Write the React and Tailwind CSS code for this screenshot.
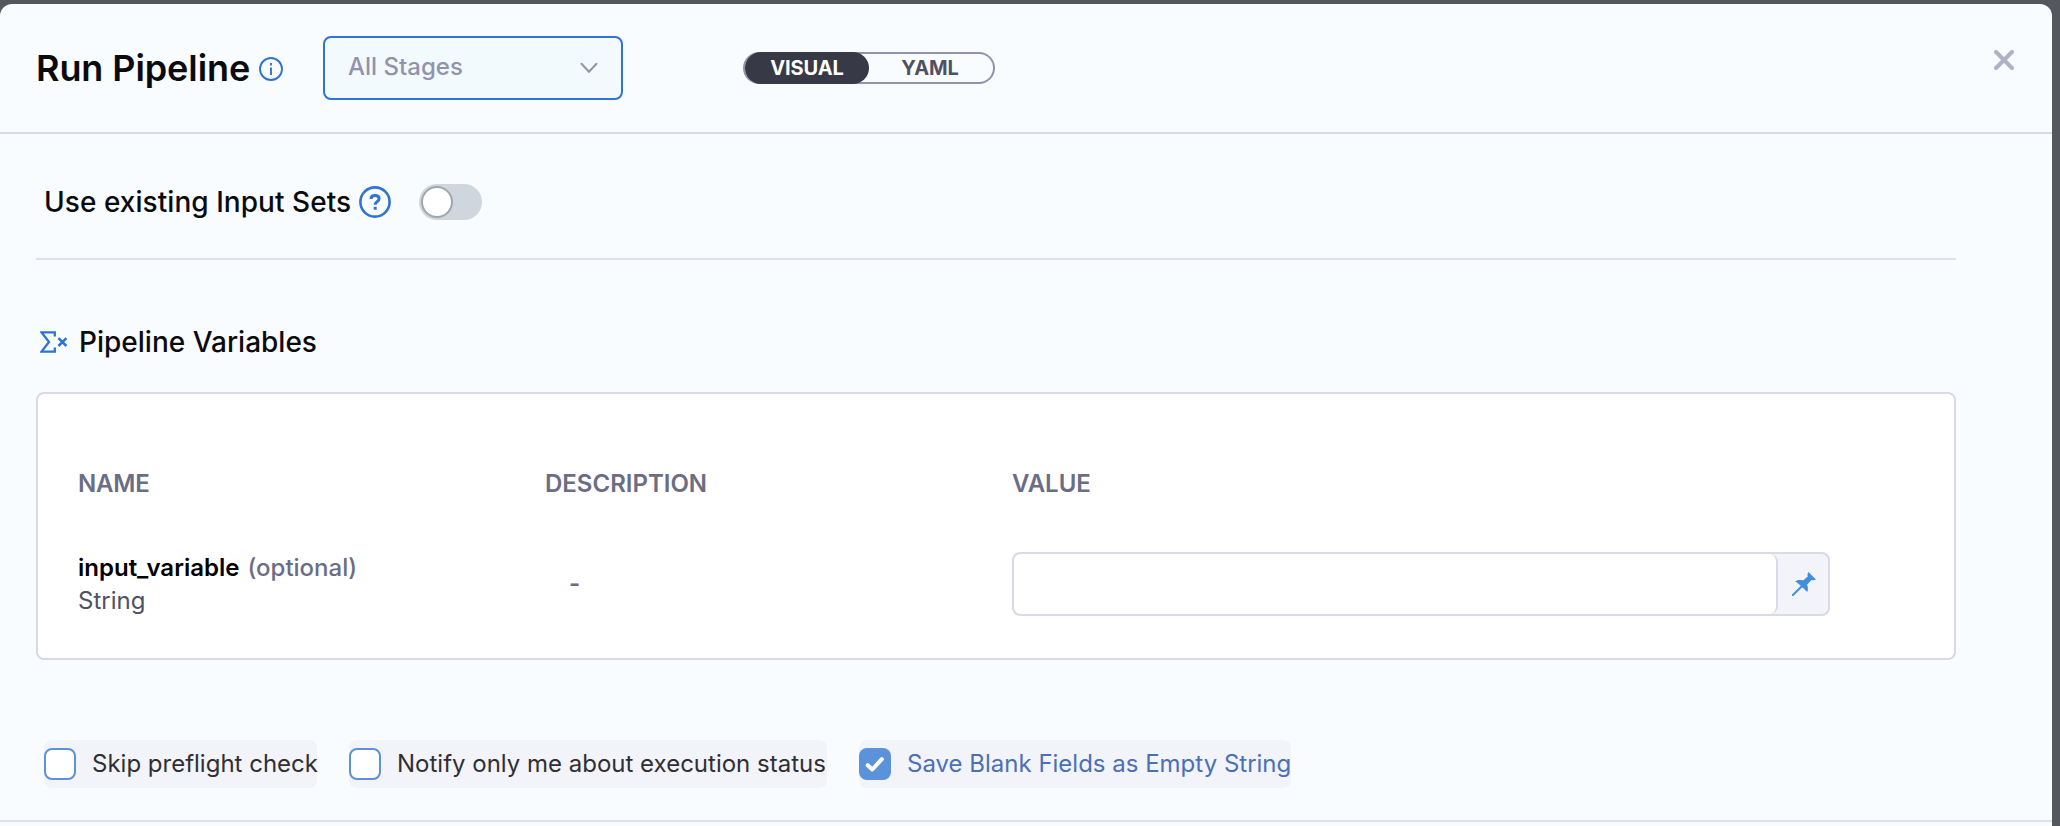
function Box({ checked, width, children }) {
  return (
    <label className={`flex h-12 items-center gap-4 rounded-lg bg-[#f3f3fa] ${width}`}>
      {checked ? (
        <span className="flex size-8 shrink-0 items-center justify-center rounded-lg bg-[#5b92da]">
          <svg width="32" height="32" viewBox="0 0 32 32" fill="none" stroke="#fff" strokeWidth="4" strokeLinecap="round" strokeLinejoin="round">
            <path d="M8.7 17.2 13.3 21.5 22.8 11.2" />
          </svg>
        </span>
      ) : (
        <span className="size-8 shrink-0 rounded-lg border-2 border-[#5b92da] bg-white" />
      )}
      <span className={checked ? "text-2xl whitespace-nowrap text-[#4a70b8]" : "text-2xl whitespace-nowrap text-[#2f2f33]"}>{children}</span>
    </label>
  );
}

export default function App() {
  return (
    <div className="h-[826px] w-[2060px] overflow-hidden bg-[#54575e] pt-1 pr-2 font-['Inter',sans-serif] text-[#0b0b0d]">
      <div className="flex h-[822px] flex-col rounded-t-xl bg-[#f9fcff]">
        <header className="flex h-[130px] shrink-0 items-start border-b-2 border-[#d9dae5] pl-9">
          <h1 className="mt-10 w-[223px] text-[36px] leading-[48px] font-semibold tracking-[-0.09px] whitespace-nowrap">Run Pipeline</h1>
          <svg className="mt-[53px] size-6" viewBox="0 0 24 24" fill="none" stroke="#2f74d0" strokeWidth="1.9">
            <circle cx="12" cy="12" r="11" />
            <path d="M12 10.5V18" />
            <path d="M12 6v2.4" />
          </svg>
          <div className="mt-8 ml-10 flex h-16 w-[300px] items-center justify-between rounded-lg border-2 border-[#2f74d0] bg-[#f2fafd] pr-[23px] pl-[23px]">
            <span className="-mt-0.5 text-2xl font-[550] text-[#9293ab]">All Stages</span>
            <svg width="18" height="12" viewBox="0 0 18 12" fill="none" stroke="#9293ab" strokeWidth="2" strokeLinecap="round">
              <path d="m1.5 1.8 7.5 8 7.5-8" />
            </svg>
          </div>
          <div className="mt-12 ml-[120px] flex h-8 w-[252px] items-stretch rounded-full bg-[#f9fcff] text-xl font-bold tracking-[-0.1px] inset-ring-2 inset-ring-[#9293ab]">
            <span className="ml-0.5 flex w-[124px] items-center justify-center rounded-full bg-[#383946] text-white">VISUAL</span>
            <span className="flex flex-1 items-center justify-center pr-1 text-[#4f5162]">YAML</span>
          </div>
          <svg className="mt-[46px] ml-[999px] size-5" viewBox="0 0 20 20" stroke="#b0b1c4" strokeWidth="4" strokeLinecap="round">
            <path d="m2 2 16 16M18 2 2 18" />
          </svg>
        </header>

        <main className="flex h-[686px] shrink-0 flex-col pr-24 pl-9">
          <section className="flex h-[126px] shrink-0 items-center border-b-2 border-[#dfe1e8] pt-4 pb-1 pl-2">
            <h2 className="w-[315px] text-[28px] font-medium tracking-[0.05px] whitespace-nowrap">Use existing Input Sets</h2>
            <svg className="size-8" viewBox="0 0 32 32" fill="none" stroke="#2f74d0" strokeWidth="2.6">
              <circle cx="16" cy="16" r="14.6" />
              <path strokeWidth="3" d="M12 13c0-2.300 1.600-3.600 4.100-3.600s4 1.400 4 3.300c0 2.900-3.900 3-3.900 6M16.200 20.800v3" />
            </svg>
            <div className="ml-7 flex h-9 w-[63px] items-center rounded-full bg-[#d0d6dd] pl-0.5">
              <span className="size-8 rounded-full border-2 border-[#9fa6ac] bg-white" />
            </div>
          </section>

          <section className="mt-[60px]">
            <div className="flex h-11 items-center">
              <svg className="ml-1 h-[22px] w-7" viewBox="0 0 28 22" fill="none" stroke="#2f74d0" strokeWidth="2.3">
                <path d="M14.800 5.500V1.400H1.600L9 11 1.600 20.600H14.800v-4.200" />
                <path strokeWidth="2.500" d="M18.400 7.200l8 7.800M26.400 7.200l-8 7.800" />
              </svg>
              <h2 className="ml-[11px] text-[28px] font-medium">Pipeline Variables</h2>
            </div>
            <div className="mt-7 flex h-[268px] flex-col rounded-lg border-2 border-[#d9dae5] bg-white pl-10">
              <div className="mt-[74px] grid h-8 grid-cols-[467px_467px_1fr] items-center text-2xl font-semibold text-[#6b6d85]">
                <span className="tracking-[-0.2px]">NAME</span>
                <span>DESCRIPTION</span>
                <span>VALUE</span>
              </div>
              <div className="mt-[51px] grid h-16 grid-cols-[467px_467px_818px] items-center text-2xl">
                <div className="leading-[33px]">
                  <div className="flex gap-2">
                    <span className="font-semibold text-black">input_variable</span>
                    <span className="font-medium text-[#6b6d85]">(optional)</span>
                  </div>
                  <div className="text-[#4f5162]">String</div>
                </div>
                <span className="pl-6 font-semibold text-[#6b6d85]">-</span>
                <div className="flex h-16 rounded-lg border-2 border-[#d9dae5] bg-[#f3f3fa]">
                  <div className="w-[764px] rounded-lg border-r-2 border-[#d9dae5] bg-white" />
                  <div className="flex flex-1 items-center justify-center pl-0.5">
                    <svg width="24" height="24" viewBox="0 0 24 24" fill="#418fde">
                      <path d="M16.400 0 24 7.500c-1.500.8-3 .9-4.500.5L15 12.700c1.200 2.500 1.200 5 .3 7.300L10.300 15.200 1.300 24 0 24 0 22.500 8.800 13.700 3.300 9.300C5.500 7.900 8.300 7.700 11 8.400L15.800 4.400C15.300 3 15.500 1.500 16.400 0Z" />
                    </svg>
                  </div>
                </div>
              </div>
            </div>
          </section>

          <section className="mt-20 ml-2 flex gap-8">
            <Box width="w-[273px]">Skip preflight check</Box>
            <Box width="w-[478px]">Notify only me about execution status</Box>
            <Box checked width="w-[432px]">Save Blank Fields as Empty String</Box>
          </section>
        </main>
        <footer className="flex-1 border-t-2 border-[#dfe1e8]" />
      </div>
    </div>
  );
}
